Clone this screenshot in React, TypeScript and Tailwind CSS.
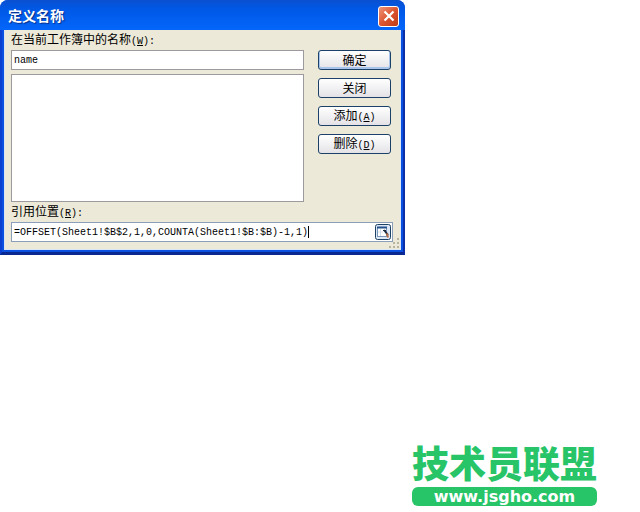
import { useState } from "react";
import type { ReactNode } from "react";

type DialogButtonProps = {
  label: string;
  accessKey?: string;
  primary?: boolean;
};

const buttons: DialogButtonProps[] = [
  { label: "确定", primary: true },
  { label: "关闭" },
  { label: "添加", accessKey: "A" },
  { label: "删除", accessKey: "D" },
];

function Latin({ children }: { children: ReactNode }) {
  return (
    <span className="font-['Liberation_Mono',monospace] text-[10px]">
      {children}
    </span>
  );
}

function AccessKey({ letter, suffix = "" }: { letter: string; suffix?: string }) {
  return (
    <Latin>
      (<u>{letter}</u>){suffix}
    </Latin>
  );
}

function DialogButton({ label, accessKey, primary }: DialogButtonProps) {
  return (
    <button
      type="button"
      className={`h-5 w-full rounded-[3px] border border-[#1b4168] bg-linear-to-b from-white to-[#e4e2e6] text-center leading-4 ${
        primary ? "shadow-[inset_0_-1px_0_1px_#a9c4ea]" : ""
      }`}
    >
      {label}
      {accessKey && <AccessKey letter={accessKey} />}
    </button>
  );
}

function TitleBar() {
  return (
    <header className="flex h-[30px] items-center justify-between bg-linear-to-b from-[#0a50d0] via-[#0058e6] via-30% to-[#0466fb] pr-1.5 pl-2">
      <h1 className="text-sm leading-4 font-bold text-white [text-shadow:1px_1px_1px_#0a2f8a]">
        定义名称
      </h1>
      <button
        type="button"
        aria-label="关闭窗口"
        className="mt-0.5 flex size-[21px] items-center justify-center rounded-[3px] border border-white bg-linear-to-br from-[#ee9478] via-[#dc5530] to-[#bd3c14]"
      >
        <svg viewBox="0 0 12 12" className="size-3" stroke="#fff" strokeWidth="2.2">
          <path d="M1.5 1.5l9 9M10.5 1.5l-9 9" />
        </svg>
      </button>
    </header>
  );
}

function RangePickerIcon() {
  return (
    <svg viewBox="0 0 16 16" className="size-4" fill="none">
      <rect x="0.5" y="0.5" width="15" height="15" rx="2" fill="#dce7f6" stroke="#1d4164" />
      <rect x="2.5" y="3.5" width="9" height="9" fill="#fff" stroke="#7896b8" />
      <path d="M2 3.5h10" stroke="#24528c" strokeWidth="2" />
      <path d="M5.5 5v7M3 8h5" stroke="#d3deeb" />
      <path d="M9 6l4 5" stroke="#1c2c40" strokeWidth="2" />
      <path d="M8 6.5h3" stroke="#1c2c40" />
      <path d="M12 9.500l1 4" stroke="#b6704b" strokeWidth="2" />
    </svg>
  );
}

function ResizeGrip() {
  return (
    <svg
      viewBox="0 0 12 12"
      className="absolute right-0 bottom-0 size-3"
      fill="#b8b4a2"
      aria-hidden="true"
    >
      <path d="M9 1h2v2H9zM9 5h2v2H9zM5 5h2v2H5zM9 9h2v2H9zM5 9h2v2H5zM1 9h2v2H1z" />
    </svg>
  );
}

function DefineNameDialog() {
  const [name, setName] = useState("name");
  const [reference, setReference] = useState(
    "=OFFSET(Sheet1!$B$2,1,0,COUNTA(Sheet1!$B:$B)-1,1)"
  );

  return (
    <section
      role="dialog"
      aria-label="定义名称"
      className="w-full max-w-[405px] overflow-hidden rounded-t-lg bg-[#0843d8] text-xs text-black"
    >
      <TitleBar />
      <div className="border-r-2 border-b-3 border-l-2 border-r-[#0a2fa8] border-b-[#0a2890] border-l-[#0a3fd0] bg-[#0a50e0] px-0.5 pb-0.5">
        <div className="relative border-x border-b border-[#dbe6f4] bg-[#ece9d8] pr-[7px] pb-[7px] pl-1.5">
          <div className="flex gap-3.5">
            <div className="flex min-w-0 flex-1 flex-col">
              <label htmlFor="name" className="h-5 leading-[18px]">
                在当前工作簿中的名称
                <AccessKey letter="W" suffix=":" />
              </label>
              <input
                id="name"
                value={name}
                onChange={(event) => setName(event.target.value)}
                className="h-5 w-full border border-[#9c9a9c] bg-white px-0.5 font-['Liberation_Mono',monospace] text-[10px] outline-none"
              />
              <select
                size={8}
                aria-label="名称列表"
                className="mt-1 h-[128px] w-full appearance-none border border-[#9c9a9c] bg-white outline-none"
              />
            </div>
            <div className="mr-0.5 flex w-[73px] flex-col gap-2 pt-5">
              {buttons.map((button) => (
                <DialogButton key={button.label} {...button} />
              ))}
            </div>
          </div>
          <label htmlFor="reference" className="block h-5 leading-[18px]">
            引用位置
            <AccessKey letter="R" suffix=":" />
          </label>
          <div className="relative flex h-5 items-center border border-[#8ba0b8] bg-white pr-px">
            <input
              id="reference"
              value={reference}
              onChange={(event) => setReference(event.target.value)}
              className="h-full min-w-0 flex-1 px-0.5 font-['Liberation_Mono',monospace] text-[10px] outline-none"
            />
            <span className="absolute top-[3px] left-[296px] h-3 w-px bg-black" />
            <button type="button" aria-label="选择区域">
              <RangePickerIcon />
            </button>
          </div>
          <ResizeGrip />
        </div>
      </div>
    </section>
  );
}

function SiteLogo() {
  return (
    <a
      href="#"
      className="mr-[43px] mb-1.5 flex w-[185px] flex-col self-end text-center"
    >
      <span className="font-['Liberation_Sans','Noto_Sans_CJK_SC',sans-serif] text-[37px] leading-[42px] font-black whitespace-nowrap text-[#27c468]">
        技术员联盟
      </span>
      <span className="rounded-md bg-[#27c468] font-['DejaVu_Sans',sans-serif] text-base leading-[19px] font-bold text-white">
        www.jsgho.com
      </span>
    </a>
  );
}

export default function App() {
  return (
    <main className="flex min-h-screen flex-col justify-between bg-white font-['Noto_Sans_CJK_SC',sans-serif]">
      <DefineNameDialog />
      <SiteLogo />
    </main>
  );
}
